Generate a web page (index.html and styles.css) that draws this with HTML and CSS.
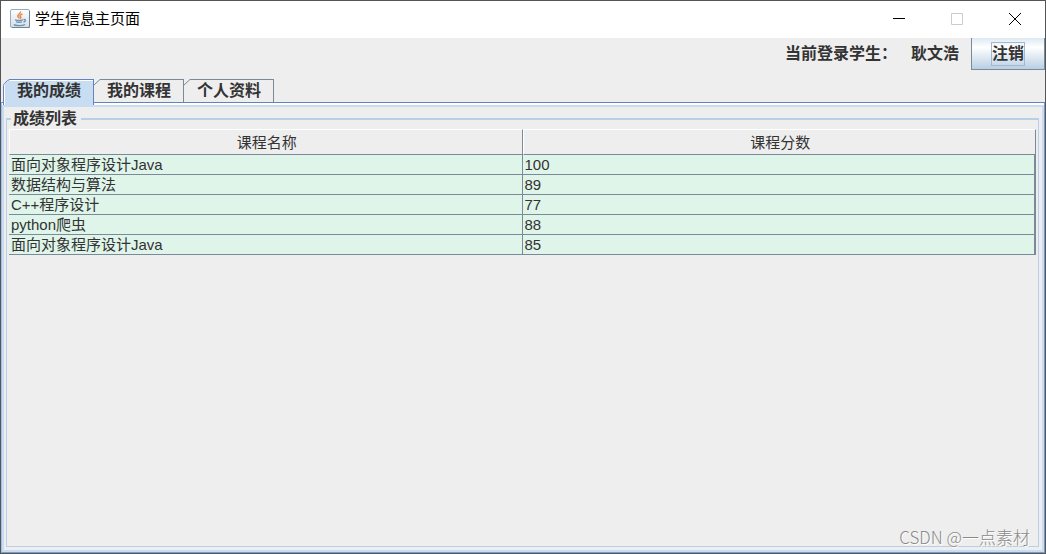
FILE: index.html
```html
<!DOCTYPE html>
<html lang="zh-CN">
<head>
<meta charset="utf-8">
<title>学生信息主页面</title>
<link rel="stylesheet" href="styles.css">
</head>
<body>
<div class="window">
  <header class="titlebar">
    <svg class="app-icon" viewBox="0 0 20 20" aria-hidden="true">
      <defs><linearGradient id="tile" x1="0" y1="0" x2="0" y2="1"><stop offset="0" stop-color="#fff"/><stop offset="1" stop-color="#d3dee8"/></linearGradient></defs>
      <rect x="0.5" y="0.5" width="19" height="18" rx="1.5" fill="url(#tile)" stroke="#9aacbc"/>
      <path d="M19.500 2v16.500H2" fill="none" stroke="#6d8499"/>
      <path d="M10.500 2.500c.5 2-3 2.800-2.700 4.800.2 1 1.700 1.400 1.700 2.300M12.500 5c-3 1-2.800 2-1.800 3 .6.700 0 1.200-.5 1.700" fill="none" stroke="#e8864a" stroke-width="1.500"/>
      <path d="M5 10.800c2 .6 6 .6 8 0M6 12.800c2 .6 4 .6 6 0M4 15.500c1 1.500 9 1.500 11 0M13.500 10.500c2.500-.5 2.500 2 0 2.500" fill="none" stroke="#7192ae" stroke-width="1.400"/>
    </svg>
    <h1 class="title">学生信息主页面</h1>
    <div class="controls">
      <button class="control" type="button" aria-label="最小化"><svg viewBox="0 0 12 12"><path d="M0 5.500h12"/></svg></button>
      <button class="control" type="button" aria-label="最大化" disabled><svg viewBox="0 0 12 12"><path d="M.5.500h11v11H.5z"/></svg></button>
      <button class="control" type="button" aria-label="关闭"><svg viewBox="0 0 12 12"><path d="M0 0l12 12M12 0L0 12"/></svg></button>
    </div>
  </header>
  <div class="userbar">
    <span>当前登录学生：</span>
    <span class="username">耿文浩</span>
    <button class="logout" type="button"><span class="focus">注销</span></button>
  </div>
  <div class="tabs" role="tablist">
    <button class="tab active" type="button" role="tab" aria-selected="true"><svg class="corner" viewBox="0 0 7 7"><path class="cut" d="M0 0h7L0 7z"/><path class="edge" d="M0 6.500L1.500 4.500 4.500 1.500 7 .5"/></svg>我的成绩</button>
    <button class="tab" type="button" role="tab" aria-selected="false"><svg class="corner" viewBox="0 0 7 7"><path class="cut" d="M0 0h7L0 7z"/><path class="edge" d="M0 6L6 .5h1"/></svg>我的课程</button>
    <button class="tab" type="button" role="tab" aria-selected="false"><svg class="corner" viewBox="0 0 7 7"><path class="cut" d="M0 0h7L0 7z"/><path class="edge" d="M0 6L6 .5h1"/></svg>个人资料</button>
  </div>
  <main class="panel" role="tabpanel">
    <fieldset class="group">
      <legend class="legend">成绩列表</legend>
      <table class="grades">
        <thead><tr><th>课程名称</th><th>课程分数</th></tr></thead>
        <tbody>
          <tr><td>面向对象程序设计Java</td><td>100</td></tr>
          <tr><td>数据结构与算法</td><td>89</td></tr>
          <tr><td>C++程序设计</td><td>77</td></tr>
          <tr><td>python爬虫</td><td>88</td></tr>
          <tr><td>面向对象程序设计Java</td><td>85</td></tr>
        </tbody>
      </table>
    </fieldset>
  </main>
  <div class="watermark">CSDN @一点素材</div>
</div>
</body>
</html>
```

FILE: styles.css
```css
* { box-sizing: border-box; }

body {
  margin: 0;
  font-family: "Liberation Sans", "Noto Sans CJK SC", sans-serif;
  font-size: 16px;
  line-height: 20px;
  color: #333;
}

button { margin: 0; padding: 0; border: 0; font: inherit; color: inherit; }

.window {
  position: relative;
  display: flex;
  flex-direction: column;
  min-height: 100vh;
  border: 1px solid #555;
  background: #eee;
}

.titlebar {
  display: flex;
  align-items: center;
  height: 37px;
  padding: 0 1px 1px 9px;
  background: #fff;
}
.app-icon { width: 20px; height: 20px; }
.title { margin: 0 0 0 5px; font-size: 15px; font-weight: 400; color: #000; }
.controls { display: flex; align-self: stretch; margin-left: auto; }
.control {
  display: grid;
  place-items: center;
  width: 58px;
  background: transparent;
}
.control svg { width: 12px; height: 12px; fill: none; stroke: #000; overflow: visible; }
.control:disabled svg { stroke: #ccc; }

.userbar {
  display: flex;
  justify-content: flex-end;
  align-items: center;
  height: 32px;
  line-height: 22px;
  font-weight: 700;
}
.username { margin: 0 12px 0 14px; }
.logout {
  align-self: stretch;
  width: 74px;
  border: 1px solid #7a8a99;
  border-top: 0;
  background: linear-gradient(#dde8f3, #fff 30%, #b8cfe5);
}
.focus { display: inline-block; border: 1px solid #a3b8cc; }

.tabs { display: flex; height: 23px; margin: 9px 0 0 2px; }
.tab {
  position: relative;
  height: 23px;
  padding: 0 12px 0 13px;
  border-top: 1px solid #7a8a99;
  border-right: 1px solid #7a8a99;
  background: #eee;
  font-weight: 700;
}
.active {
  z-index: 1;
  height: 26px;
  padding-bottom: 3px;
  border: 1px solid #6382bf;
  border-bottom: 0;
  background: #c8ddf2;
  box-shadow: inset 1px 1px #fff;
}
.corner { position: absolute; top: -1px; left: 0; width: 7px; height: 7px; }
.active .corner { left: -1px; }
.cut { fill: #eee; }
.edge { fill: none; stroke: #7a8a99; }
.active .edge { stroke: #6382bf; }

.panel {
  flex: 1;
  display: flex;
  padding: 4px 3px 3px 2px;
  border: 1px solid #6382bf;
  border-color: #6382bf #7a9bc8 #7a9bc8 #a3c0e8;
  box-shadow: inset 0 2px #fff, inset 0 4px #c8ddf2, inset 2px 0 #c8ddf2, inset -2px -2px #c8ddf2;
}
.group {
  flex: 1;
  min-width: 0;
  margin: 2px;
  padding: 0 2px 4px;
  border: 1px solid #b8cfe5;
  border-top-width: 2px;
}
.legend { margin-left: 2px; padding: 0 4px 0 2px; font-weight: 700; }

.grades {
  width: 100%;
  table-layout: fixed;
  border-collapse: separate;
  border-spacing: 0;
  font-size: 15px;
}
.grades th {
  height: 26px;
  padding: 2px 0 0 2px;
  border: 1px solid #7a8a99;
  border-top-color: #fff;
  border-left-color: #fff;
  font-weight: 400;
}
.grades td {
  height: 20px;
  padding: 0 2px;
  border-right: 1px solid #7a8a99;
  border-bottom: 1px solid #7a8a99;
  background: #dff5ea;
  line-height: 19px;
}
.grades td:last-child { border-right-width: 2px; }

.watermark {
  position: absolute;
  right: 15px;
  bottom: 6px;
  font-family: "Noto Sans CJK SC", sans-serif;
  font-size: 17px;
  font-weight: 300;
  color: #8a8a8a;
  text-shadow: 1px 1px #fff;
}
```
